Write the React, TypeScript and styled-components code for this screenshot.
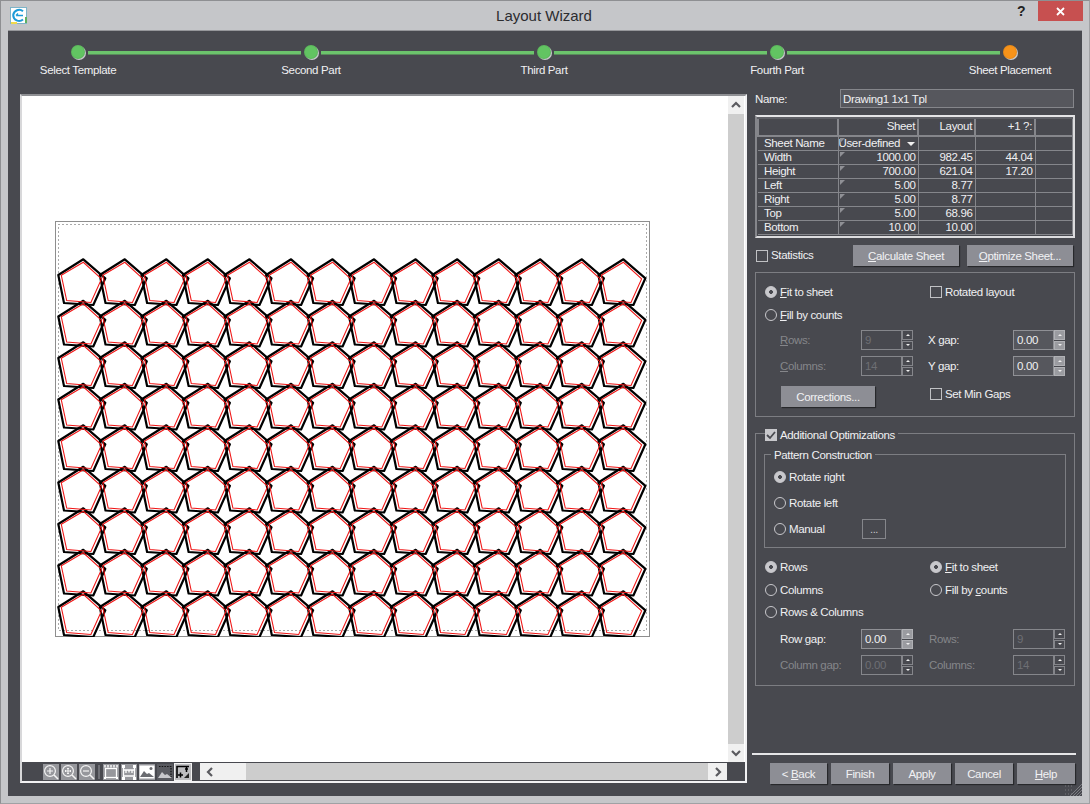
import React from "react";
import styled, { createGlobalStyle } from "styled-components";

const Global = createGlobalStyle`
  html, body { margin: 0; padding: 0; background: #c5c6c9; }
  * { box-sizing: border-box; }
`;

const Win = styled.div`
  width: 1090px; height: 804px; background: #c5c6c9;
  border: 1px solid #8e8f92; border-right-color: #a0a1a4; border-bottom-color: #a0a1a4;
  display: flex; flex-direction: column; overflow: hidden;
  font-family: "Liberation Sans", Arial, sans-serif; font-size: 11.5px; letter-spacing: -0.35px; color: #f0f0f2;
`;
const TitleBar = styled.div`
  height: 29px; flex: none; display: flex; align-items: flex-start; position: relative; padding-left: 9px;
`;
const AppIcon = styled.svg`width: 17px; height: 17px; margin-top: 6px; flex: none;`;
const Title = styled.div`
  flex: 1; text-align: center; color: #2c2c30; font-size: 15px; letter-spacing: 0; line-height: 30px; padding-left: 53px;
`;
const HelpMark = styled.div`
  width: 26px; text-align: center; color: #222; font-weight: 700; font-size: 14px; line-height: 20px; margin-right: 4px;
`;
const CloseBtn = styled.div`
  width: 45px; height: 20px; background: #c75050; margin-right: 6px; display: flex; align-items: center; justify-content: center;
`;
const Client = styled.div`
  width: 1074px; height: 766px; margin-left: 7px; flex: none; background: #48494f;
  border-top: 1px solid #96979b; padding: 0 6px 0 12px; position: relative;
`;
const Stepper = styled.div`
  height: 58px; display: flex; padding-top: 14px;
`;
const Step = styled.div<{ $last?: boolean }>`
  width: ${p => (p.$last ? "116px" : "233px")}; position: relative; display: flex; flex-direction: column; align-items: flex-start; flex: none;
  &::after {
    content: ${p => (p.$last ? "none" : '""')};
    position: absolute; left: 68px; width: 213px; top: 6px; height: 3px; background: #6cc46c; border-bottom: 1px solid #5a8a5c;
  }
`;
const Dot = styled.span<{ $c: string }>`
  width: 14px; height: 14px; border-radius: 50%; background: ${p => p.$c}; margin-left: 51px;
  box-shadow: 1px 1px 0 0 #c8c8cc, inset 0 0 0 1px rgba(0,0,0,.06);
`;
const StepLabel = styled.span`
  width: 116px; text-align: center; margin-top: 3px; line-height: 16px; white-space: nowrap; margin-left: 0;
`;
const Main = styled.div`display: flex; gap: 8px; align-items: flex-start;`;
const Canvas = styled.div`
  width: 727px; height: 689px; margin-top: 5px; flex: none; display: flex; flex-direction: column;
  border-top: 2px solid #8f9094; border-left: 2px solid #d8d8da; border-right: 2px solid #f2f2f4; border-bottom: 2px solid #f2f2f4;
  background: #fff;
`;
const CanvasTop = styled.div`flex: 1; display: flex; min-height: 0;`;
const DrawArea = styled.div`flex: 1; background: #fff; padding: 125px 0 0 33px;`;
const VScroll = styled.div`
  width: 16px; margin-right: 1px; flex: none; display: flex; flex-direction: column; background: #f0f0f0;
`;
const ArrowBox = styled.div`
  height: 18px; flex: none; display: flex; align-items: center; justify-content: center; background: #f0f0f0;
`;
const HArrowBox = styled(ArrowBox)`width: 19px; height: 17px;`;
const VThumb = styled.div`flex: 1; background: #cdcdcd;`;
const CanvasBottom = styled.div`height: 19px; flex: none; display: flex; background: #48494f; padding-top: 1px;`;
const Toolbar = styled.div`
  width: 178px; height: 17px; flex: none; display: flex; padding-left: 21px; gap: 2px; align-items: center;
`;
const ToolSep = styled.span`width: 2px; height: 14px; background: #6f7076; margin: 0 1px;`;
const HScroll = styled.div`flex: 1; display: flex; height: 17px; background: #f0f0f0;`;
const HTrack = styled.div`width: 27px; background: #f0f0f0; flex: none;`;
const HThumb = styled.div`flex: 1; background: #cdcdcd;`;
const Corner = styled.div`width: 18px; flex: none; background: #48494f;`;
const Side = styled.div`width: 320px; flex: none; display: flex; flex-direction: column;`;
const NameRow = styled.div`display: flex; align-items: center; height: 19px; margin-bottom: 7px;`;
const NameLabel = styled.label`width: 85px;`;
const NameInput = styled.div`
  width: 234px; height: 19px; background: #56575d; border: 1px solid #85868b; padding-left: 2px; line-height: 18px;
`;
const TableWrap = styled.div`
  width: 320px; height: 123px; border: 2px solid #dcdcde; border-left-color: #85868b; border-top-color: #e4e4e6; overflow: hidden; background: #48494f;
`;
const GridTable = styled.table`
  border-collapse: collapse; table-layout: fixed; width: 316px; margin: 0;
  line-height: 13px; font-size: 11.5px;
  col:nth-child(1) { width: 80px; } col:nth-child(2) { width: 80px; } col:nth-child(3) { width: 57px; } col:nth-child(4) { width: 60px; }
`;
const Th = styled.th`
  height: 18px; border: 1px solid #85868b; border-top: 2px solid #5f6066; border-left: 2px solid #85868b; border-bottom: 2px solid #85868b;
  text-align: right; font-weight: 400; padding: 0 2px 1px 0; white-space: nowrap;
`;
const Td = styled.td<{ $mark?: boolean }>`
  height: 14px; border: 1px solid #85868b; text-align: right; padding: 0 2px 0 0; white-space: nowrap; overflow: hidden; position: relative;
  ${p => p.$mark && `&::before { content: ""; position: absolute; left: 1px; top: 1px; border-top: 5px solid #8f9095; border-right: 5px solid transparent; }`}
`;
const TdLabel = styled(Td)`text-align: left; padding-left: 6px; border-left: none;`;
const Combo = styled.span`display: flex; align-items: center; gap: 7px; padding-left: 0; text-align: left;`;
const DownTri = styled.span`flex: none; width: 0; height: 0; border: 4px solid transparent; border-top: 4px solid #f0f0f0; border-bottom: none;`;
const StatsRow = styled.div`display: flex; align-items: center; height: 21px; margin-top: 7px; margin-bottom: 6px; padding-left: 1px;`;
const StatsLabel = styled.span`width: 82px; padding-bottom: 2px;`;
const StatsGap = styled.span`width: 8px; flex: none;`;
const Check = styled.span<{ $on?: boolean }>`
  width: 12px; height: 12px; flex: none; border: 1px solid ${p => (p.$on ? "#c8c8cc" : "#c0c1c4")}; background: ${p => (p.$on ? "#c8c8cc" : "transparent")};
  margin-right: 3px; display: inline-flex; align-items: center; justify-content: center;
`;
const Btn = styled.div<{ $w: number }>`
  width: ${p => p.$w}px; height: 21px; background: #8d8e95; color: #f2f2f4; display: flex; align-items: center; justify-content: center;
  box-shadow: 1px 1px 1px rgba(0,0,0,.45); flex: none; white-space: nowrap;
  u { text-underline-offset: 1px; }
`;
const Opt = styled.div<{ $col?: number; $row?: number; $dim?: boolean }>`
  display: flex; align-items: center; white-space: nowrap; height: 20px;
  color: ${p => (p.$dim ? "#85868a" : "inherit")};
  u { text-underline-offset: 1px; }
  ${p => p.$col && `grid-column: ${p.$col};`}
  ${p => p.$row && `grid-row: ${p.$row};`}
`;
const Radio = styled.span<{ $on?: boolean }>`
  width: 12px; height: 12px; border-radius: 50%; flex: none; margin-right: 3px; border: 1px solid #c8c8cc;
  background: ${p => (p.$on ? "radial-gradient(circle, #48494f 0 1.6px, #c8c8cc 2.2px)" : "transparent")};
`;
const Group = styled.div<{ $h: number }>`
  width: 320px; height: ${p => p.$h}px; border: 1px solid #7c7d82; position: relative; flex: none;
`;
const OptGrid1 = styled.div`
  display: grid; grid-template-columns: 165px 83px 52px; grid-template-rows: 20px 26px 24px 28px 27px; align-items: center;
  padding: 9px 0 0 9px; height: 100%;
`;
const Slot = styled.div<{ $col: number; $row: number }>`
  grid-column: ${p => p.$col}; grid-row: ${p => p.$row};
`;
const Indent = styled(Slot)`padding-left: 15px; display: flex; align-items: center; justify-content: space-between; width: 148px;`;
const GapLabel = styled(Slot)`margin-left: -2px; white-space: nowrap; u { text-underline-offset: 1px; }`;
const CorrectionsSlot = styled(Slot)`padding: 6px 0 0 16px;`;
const Spin = styled.div<{ $dim?: boolean }>`
  display: flex; width: 52px; height: 20px; flex: none;
  color: ${p => (p.$dim ? "#6e6f74" : "#f0f0f2")};
`;
const SpinBox = styled.div<{ $dim?: boolean }>`
  width: 41px; height: 20px; border: 1px solid ${p => (p.$dim ? "#85868b" : "#8f9095")}; background: ${p => (p.$dim ? "transparent" : "#56575d")}; padding-left: 3px; line-height: 18px;
`;
const SpinBtns = styled.div`width: 11px; display: flex; flex-direction: column; gap: 1px; flex: none;`;
const SpinBtn = styled.span<{ $active?: boolean; $up?: boolean }>`
  flex: 1; background: ${p => (p.$active ? "#9a9ba0" : "#48494f")}; border: 1px solid ${p => (p.$active ? "#b0b1b5" : "#85868b")};
  display: flex; align-items: center; justify-content: center;
  &::after { content: ""; border: 2px solid transparent; ${p => (p.$up ? "border-bottom: 2px solid #eee; border-top: none;" : "border-top: 2px solid #eee; border-bottom: none;")} }
`;
const LegendCheck = styled.div`
  position: absolute; left: 9px; top: -5px; background: #48494f; display: flex; align-items: center; padding-right: 3px; height: 12px;
`;
const Inner = styled.div`
  width: 302px; height: 94px; margin: 20px 0 0 8px; border: 1px solid #7c7d82; position: relative; padding: 12px 0 0 9px; display: flex; flex-direction: column; gap: 6px;
`;
const InnerLegend = styled.div`
  position: absolute; left: 6px; top: -7px; background: #48494f; padding: 0 3px; line-height: 15px; white-space: nowrap;
`;
const ManualLabel = styled.span`width: 73px;`;
const Dots = styled.span`
  width: 24px; height: 20px; border: 1px solid #85868b; display: flex; align-items: center; justify-content: center; color: #c8c8cc; font-size: 11px;
`;
const OptGrid2 = styled.div`
  display: grid; grid-template-columns: 165px 1fr; padding: 8px 0 0 9px; grid-template-rows: 22px 24px 20px; align-items: center;
`;
const Gaps = styled.div`
  display: grid; grid-template-columns: 81px 68px 84px 52px; grid-template-rows: 20px 20px; row-gap: 6px; padding: 7px 0 0 24px; align-items: center;
`;
const Cell = styled.div<{ $dim?: boolean }>`color: ${p => (p.$dim ? "#85868a" : "inherit")}; white-space: nowrap; u { text-underline-offset: 1px; }`;
const Rule = styled.div`
  width: 324px; height: 2px; margin-left: -3px; background: #e6e6e8; margin-top: 67px;
`;
const Footer = styled.div`display: flex; justify-content: flex-end; gap: 4px; margin-top: 8px; width: 320px;`;
const GroupGap = styled.div<{ $h: number }>`height: ${p => p.$h}px; flex: none;`;
const Grip = styled.svg`position: absolute; right: 0; bottom: 0; width: 17px; height: 12px;`;
const SheetSvg = styled.svg`display: block;`;

const Chev = ({ d }: { d: string }) => (
  <svg width="10" height="10" viewBox="0 0 10 10"><path d={d} fill="none" stroke="#5a5a5f" strokeWidth="2.2" /></svg>
);

const Tool = styled.svg<{ $mode?: string }>`
  width: 16px; height: 16px; flex: none;
  background: ${p => (p.$mode === "dark" ? "#6c6d72" : p.$mode === "sel" ? "#48494f" : "#96979c")};
  ${p => p.$mode === "sel" && "outline: 1px solid #f2f2f2;"}
`;

const zoomBase = (inner: React.ReactNode) => (
  <Tool viewBox="0 0 16 16">
    <circle cx="7" cy="7" r="5.4" fill="none" stroke="#f4f4f4" strokeWidth="1.2" />
    <path d="M11 11l4 4" stroke="#f4f4f4" strokeWidth="1.6" />
    {inner}
  </Tool>
);

const Pts = {
  black: [[-25, 15.7], [0, 0], [22, 19], [10, 45.7], [-19.3, 43.7]],
  red: [[-22, 16], [0, 3], [18.2, 19.6], [7.6, 43.2], [-16.6, 41.2]],
};
const poly = (pts: number[][], x: number, y: number) => pts.map(p => `${(p[0] + x).toFixed(1)},${(p[1] + y).toFixed(1)}`).join(" ");

const Sheet = () => {
  const items: React.ReactNode[] = [];
  for (let r = 0; r < 9; r++) {
    for (let c = 0; c < 14; c++) {
      const x = 28.3 + c * 41.55;
      const y = 38.3 + r * 41.5;
      items.push(<polygon key={`b${r}-${c}`} points={poly(Pts.black, x, y)} fill="none" stroke="#000" strokeWidth="2.2" strokeLinejoin="round" />);
    }
  }
  for (let r = 0; r < 9; r++) {
    for (let c = 0; c < 14; c++) {
      const x = 28.3 + c * 41.55;
      const y = 38.3 + r * 41.5;
      items.push(<polygon key={`r${r}-${c}`} points={poly(Pts.red, x, y)} fill="none" stroke="#f01818" strokeWidth="1.1" />);
    }
  }
  return (
    <SheetSvg width="595" height="416" viewBox="0 0 595 416">
      <rect x="0.5" y="0.5" width="594" height="415" fill="#fff" stroke="#8e8e8e" />
      <rect x="3.5" y="3.5" width="588" height="406" fill="none" stroke="#555" strokeWidth="1" strokeDasharray="1 3" />
      {items}
    </SheetSvg>
  );
};

const Steps = [
  ["Select Template", "#62c462"],
  ["Second Part", "#62c462"],
  ["Third Part", "#62c462"],
  ["Fourth Part", "#62c462"],
  ["Sheet Placement", "#f7931a"],
];

const rows = [
  ["Width", "1000.00", "982.45", "44.04"],
  ["Height", "700.00", "621.04", "17.20"],
  ["Left", "5.00", "8.77", ""],
  ["Right", "5.00", "8.77", ""],
  ["Top", "5.00", "68.96", ""],
  ["Bottom", "10.00", "10.00", ""],
];

const SpinField = ({ v, dim, active }: { v: string; dim?: boolean; active?: boolean }) => (
  <Spin $dim={dim}>
    <SpinBox $dim={dim}>{v}</SpinBox>
    <SpinBtns>
      <SpinBtn $up $active={active} />
      <SpinBtn $active={active} />
    </SpinBtns>
  </Spin>
);

export default function App() {
  return (
    <>
      <Global />
      <Win>
        <TitleBar>
          <AppIcon viewBox="0 0 17 17">
            <rect x="0.5" y="0.5" width="16" height="16" fill="#fff" stroke="#7fb4c8" />
            <path d="M1 16h6" stroke="#f0d84a" strokeWidth="2" />
            <path d="M16 16v-6" stroke="#5fb060" strokeWidth="2" />
            <path d="M13 4.2A6 6 0 0 0 3.2 8a6 6 0 0 0 9.8 4.6" fill="none" stroke="#1d9bd8" strokeWidth="2" />
            <path d="M6 8.5h7M6 8.5l2-2" stroke="#1d9bd8" strokeWidth="1.3" fill="none" />
          </AppIcon>
          <Title>Layout Wizard</Title>
          <HelpMark>?</HelpMark>
          <CloseBtn>
            <svg width="9" height="9" viewBox="0 0 9 9"><path d="M1 1l7 7M8 1L1 8" stroke="#fff" strokeWidth="1.8" /></svg>
          </CloseBtn>
        </TitleBar>
        <Client>
          <Stepper>
            {Steps.map(([t, c], i) => (
              <Step key={t} $last={i === 4}>
                <Dot $c={c} />
                <StepLabel>{t}</StepLabel>
              </Step>
            ))}
          </Stepper>
          <Main>
            <Canvas>
              <CanvasTop>
                <DrawArea><Sheet /></DrawArea>
                <VScroll>
                  <ArrowBox><Chev d="M1 7l4-4 4 4" /></ArrowBox>
                  <VThumb />
                  <ArrowBox><Chev d="M1 3l4 4 4-4" /></ArrowBox>
                </VScroll>
              </CanvasTop>
              <CanvasBottom>
                <Toolbar>
                  {zoomBase(<path d="M4 7h6M7 4v6" stroke="#f4f4f4" strokeWidth="1.2" />)}
                  {zoomBase(<path d="M4 7h6M7 4v6M4 7l1-1M4 7l1 1M10 7L9 6M10 7L9 8M7 4L6 5M7 4l1 1M7 10L6 9M7 10l1-1" stroke="#f4f4f4" strokeWidth="1" fill="none" />)}
                  {zoomBase(<path d="M4 7h6" stroke="#f4f4f4" strokeWidth="1.2" />)}
                  <ToolSep />
                  <Tool viewBox="0 0 16 16">
                    <path d="M2 1v2.5M5 1v2.5M8 1v2.5M11 1v2.5M14 1v2.5" stroke="#fff" strokeWidth="1.4" />
                    <rect x="2.5" y="4.5" width="11" height="9" fill="none" stroke="#fff" strokeWidth="1.3" />
                    <path d="M1 13h2v2H1zM13 13h2v2h-2z" fill="#fff" />
                  </Tool>
                  <Tool viewBox="0 0 16 16">
                    <path d="M2.5 3v11M13.5 3v11M2.5 12h11M2.5 6h11" stroke="#fff" strokeWidth="1.3" />
                    <path d="M5 6V9M8 6V8.5M11 6V9" stroke="#fff" strokeWidth="1.3" />
                    <path d="M1 1h3v3H1zM12 1h3v3h-3zM1 13h3v3H1zM12 13h3v3h-3z" fill="#fff" />
                  </Tool>
                  <Tool viewBox="0 0 16 16">
                    <rect x="0.5" y="1.5" width="15" height="13" fill="#fff" />
                    <path d="M1 13l4-6 3 3 2-1 5 4z" fill="#6a6b70" />
                    <circle cx="12" cy="4.5" r="1.5" fill="#6a6b70" />
                  </Tool>
                  <Tool $mode="dark" viewBox="0 0 16 16">
                    <rect x="0" y="0" width="16" height="16" fill="#5a5b61" />
                    <path d="M2 2.5h12v11" fill="none" stroke="#111" strokeWidth="1.2" strokeDasharray="1.5 1.2" />
                    <path d="M1 14l4-6 3 3 2-1 5 4z" fill="#c8c8cc" />
                  </Tool>
                  <Tool $mode="sel" viewBox="0 0 16 16">
                    <rect x="0" y="0" width="16" height="16" fill="#bdbdc0" />
                    <path d="M2 14V2.5h12" fill="none" stroke="#000" strokeWidth="1.6" />
                    <path d="M3 11h5M5.5 8.5v5M10 5h3M11.5 3v5" stroke="#000" strokeWidth="1.5" />
                    <path d="M9 14l5-5v5z" fill="#222" />
                  </Tool>
                </Toolbar>
                <HScroll>
                  <HArrowBox><Chev d="M7 1L3 5l4 4" /></HArrowBox>
                  <HTrack />
                  <HThumb />
                  <HArrowBox><Chev d="M3 1l4 4-4 4" /></HArrowBox>
                </HScroll>
                <Corner />
              </CanvasBottom>
            </Canvas>
            <Side>
              <NameRow>
                <NameLabel>Name:</NameLabel>
                <NameInput>Drawing1 1x1 Tpl</NameInput>
              </NameRow>
              <TableWrap>
                <GridTable>
                  <colgroup><col /><col /><col /><col /><col /></colgroup>
                  <thead>
                    <tr>
                      <Th></Th><Th>Sheet</Th><Th>Layout</Th><Th>+1 ?:</Th><Th></Th>
                    </tr>
                  </thead>
                  <tbody>
                    <tr>
                      <TdLabel>Sheet Name</TdLabel>
                      <Td $mark><Combo>User-defined <DownTri /></Combo></Td>
                      <Td /><Td /><Td />
                    </tr>
                    {rows.map(r => (
                      <tr key={r[0]}>
                        <TdLabel>{r[0]}</TdLabel>
                        <Td $mark>{r[1]}</Td>
                        <Td>{r[2]}</Td>
                        <Td>{r[3]}</Td>
                        <Td />
                      </tr>
                    ))}
                  </tbody>
                </GridTable>
              </TableWrap>
              <StatsRow>
                <Check />
                <StatsLabel>Statistics</StatsLabel>
                <Btn $w={106}><span><u>C</u>alculate Sheet</span></Btn>
                <StatsGap />
                <Btn $w={106}><span><u>O</u>ptimize Sheet...</span></Btn>
              </StatsRow>
              <Group $h={145}>
                <OptGrid1>
                  <Opt $col={1} $row={1}><Radio $on /><span><u>F</u>it to sheet</span></Opt>
                  <Opt $col={2} $row={1}><Check /><span>Rotated layout</span></Opt>
                  <Opt $col={1} $row={2}><Radio /><span><u>F</u>ill by counts</span></Opt>
                  <Indent $col={1} $row={3}><Cell $dim><u>R</u>ows:</Cell><SpinField v="9" dim /></Indent>
                  <GapLabel $col={2} $row={3}>X <u>g</u>ap:</GapLabel>
                  <Slot $col={3} $row={3}><SpinField v="0.00" active /></Slot>
                  <Indent $col={1} $row={4}><Cell $dim><u>C</u>olumns:</Cell><SpinField v="14" dim /></Indent>
                  <GapLabel $col={2} $row={4}>Y <u>g</u>ap:</GapLabel>
                  <Slot $col={3} $row={4}><SpinField v="0.00" active /></Slot>
                  <CorrectionsSlot $col={1} $row={5}><Btn $w={94}>Corrections...</Btn></CorrectionsSlot>
                  <Opt $col={2} $row={5}><Check /><span>Set Min Gaps</span></Opt>
                </OptGrid1>
              </Group>
              <GroupGap $h={16} />
              <Group $h={253}>
                <LegendCheck>
                  <Check $on>
                    <svg width="10" height="10" viewBox="0 0 10 10"><path d="M1 5l3 3 5-6" fill="none" stroke="#48494f" strokeWidth="1.8" /></svg>
                  </Check>
                  <span>Additional Optimizations</span>
                </LegendCheck>
                <Inner>
                  <InnerLegend>Pattern Construction</InnerLegend>
                  <Opt><Radio $on /><span>Rotate right</span></Opt>
                  <Opt><Radio /><span>Rotate left</span></Opt>
                  <Opt><Radio /><ManualLabel>Manual</ManualLabel><Dots>...</Dots></Opt>
                </Inner>
                <OptGrid2>
                  <Opt><Radio $on /><span>Rows</span></Opt>
                  <Opt><Radio $on /><span><u>F</u>it to sheet</span></Opt>
                  <Opt><Radio /><span>Columns</span></Opt>
                  <Opt><Radio /><span>Fill by <u>c</u>ounts</span></Opt>
                  <Opt><Radio /><span>Rows &amp; Columns</span></Opt>
                </OptGrid2>
                <Gaps>
                  <Cell>Row <u>g</u>ap:</Cell>
                  <SpinField v="0.00" active />
                  <Cell $dim>Rows:</Cell>
                  <SpinField v="9" dim />
                  <Cell $dim>Column gap:</Cell>
                  <SpinField v="0.00" dim />
                  <Cell $dim>Columns:</Cell>
                  <SpinField v="14" dim />
                </Gaps>
              </Group>
              <Rule />
              <Footer>
                <Btn $w={57}><span>&lt; <u>B</u>ack</span></Btn>
                <Btn $w={58}>Finish</Btn>
                <Btn $w={58}>Apply</Btn>
                <Btn $w={58}>Cancel</Btn>
                <Btn $w={58}><span><u>H</u>elp</span></Btn>
              </Footer>
            </Side>
          </Main>
          <Grip viewBox="0 0 17 12">
            <path d="M0 10h1M3 10h1M6 10h1M0 6h1M3 6h1M6 6h1M0 2h1M3 2h1M6 2h1" stroke="#77787d" />
            <path d="M8 12L17 3M11 12L17 6M14 12L17 9M5 12L17 0" stroke="#7c7d82" strokeWidth="1" />
          </Grip>
        </Client>
      </Win>
    </>
  );
}
